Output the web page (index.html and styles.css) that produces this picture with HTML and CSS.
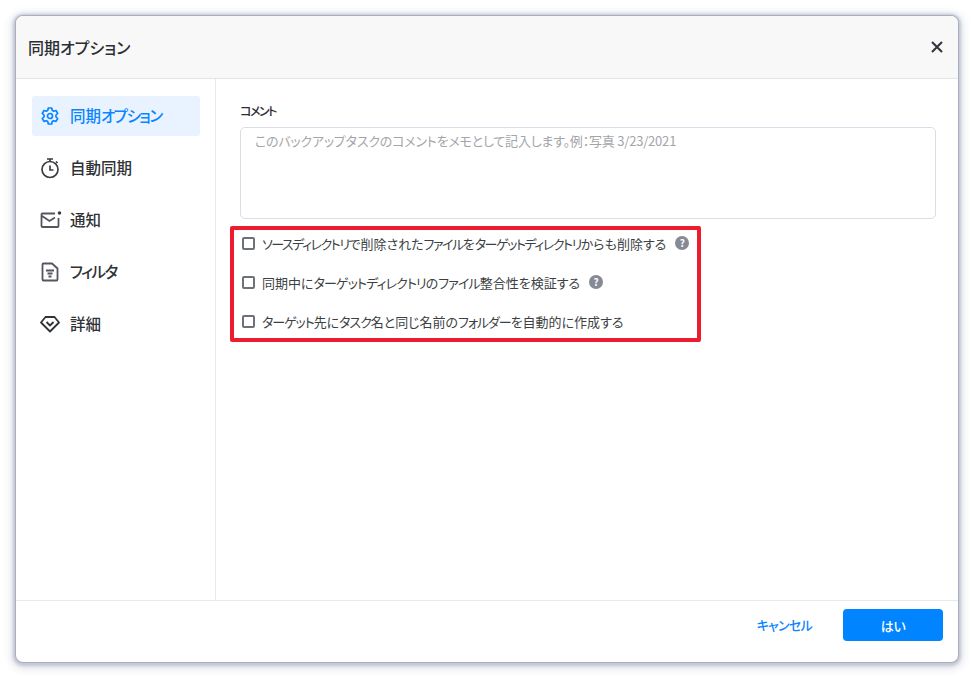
FILE: index.html
```html
<!DOCTYPE html>
<html lang="ja">
<head>
<meta charset="utf-8">
<title>同期オプション</title>
<link rel="stylesheet" href="styles.css">
</head>
<body>
<div class="dialog">
  <header class="head">
    <h1 class="title">同期オプション</h1>
    <svg class="close" width="14" height="14" viewBox="0 0 14 14"><path d="M2 2l10 10M12 2L2 12" fill="none" stroke="#33363b" stroke-width="2.1"/></svg>
  </header>
  <div class="main">
    <nav class="side">
      <a class="item active">
        <svg class="ico" width="20" height="20" viewBox="0 0 20 20" fill="none" stroke="#0a84ff" stroke-width="1.7" stroke-linejoin="round"><path d="M8.3 2h3.4l.5 2.3 1.500.9 2.300-.7 1.700 2.900-1.700 1.600v1.900l1.700 1.600-1.700 2.900-2.300-.7-1.500.9-.5 2.400H8.300l-.5-2.400-1.500-.9-2.300.7-1.700-2.900 1.700-1.600V9L2.300 7.400 4 4.500l2.300.7 1.500-.9z"/><circle cx="10" cy="10" r="2.500"/></svg>
        <span class="txt">同期<span class="k">オプション</span></span>
      </a>
      <a class="item">
        <svg class="ico" width="20" height="22" viewBox="0 0 20 22" fill="none" stroke="#3a3d42" stroke-width="1.700"><circle cx="10" cy="12.500" r="8"/><path d="M7 2h6M10 2v2.500M10 8.500v4.500h3.500M16 4.500l1.500 1.500"/></svg>
        <span class="txt">自動同期</span>
      </a>
      <a class="item">
        <svg class="ico" width="22" height="18" viewBox="0 0 22 18" fill="none" stroke="#53565c" stroke-width="1.800"><path d="M15 2.500H2.500a1 1 0 0 0-1 1v11.500a1 1 0 0 0 1 1h15a1 1 0 0 0 1-1V7M2 5l7.500 5L15 6.500"/><circle cx="19.500" cy="2" r="1.800" fill="#3a3d42" stroke="none"/></svg>
        <span class="txt txt-mail">通知</span>
      </a>
      <a class="item">
        <svg class="ico" width="20" height="20" viewBox="0 0 20 20" fill="none" stroke="#53565c" stroke-width="1.800"><path d="M3.500 1.500h8.500l5.500 5v11a1 1 0 0 1-1 1h-13a1 1 0 0 1-1-1v-15a1 1 0 0 1 1-1zM6 8.500h8M7.500 11.500h5M8.500 14.500h3"/></svg>
        <span class="txt"><span class="k">フィルタ</span></span>
      </a>
      <a class="item">
        <svg class="ico" width="20" height="18" viewBox="0 0 20 18" fill="none" stroke="#2f3236" stroke-width="1.800" stroke-linejoin="round"><path d="M5.500 2h9l4.500 5.500-9 9-9-9zM6.500 7l3.500 3.500L13.500 7"/></svg>
        <span class="txt">詳細</span>
      </a>
    </nav>
    <section class="content">
      <label class="label">コメント</label>
      <textarea class="memo" placeholder="このバックアップタスクのコメントをメモとして記入します。例：写真 3/23/2021"></textarea>
      <div class="options">
        <div class="opt opt-a"><span class="box"></span><span><span class="k">ソースディレクトリ</span>で削除された<span class="k">ファイル</span>を<span class="k">ターゲットディレクトリ</span>からも削除する</span><span class="help">?</span></div>
        <div class="opt opt-b"><span class="box"></span><span>同期中に<span class="k">ターゲットディレクトリ</span>の<span class="k">ファイル</span>整合性を検証する</span><span class="help">?</span></div>
        <div class="opt opt-c"><span class="box"></span><span><span class="k">ターゲット</span>先に<span class="k">タスク</span>名と同じ名前の<span class="k">フォルダー</span>を自動的に作成する</span></div>
        <div class="mark"></div>
      </div>
    </section>
  </div>
  <footer class="foot">
    <a class="cancel">キャンセル</a>
    <button class="ok">はい</button>
  </footer>
</div>
</body>
</html>
```
FILE: styles.css
```css
* { box-sizing: border-box; }
html, body { margin: 0; height: 100%; background: #fff; }
body {
  padding: 16px;
  font-family: "Noto Sans CJK JP", "Noto Sans", sans-serif;
  font-feature-settings: "palt";
  color: #2f3236;
}
.dialog {
  width: 942px;
  height: 646px;
  background: #fff;
  border-radius: 7px;
  box-shadow: 0 0 0 1px #a9aebd, 0 1px 3px 3px #c3c7d3, 0 2px 8px 5px #e3e5ec;
  display: flex;
  flex-direction: column;
  overflow: hidden;
}
.head {
  height: 63px;
  flex: none;
  background: #f8f8f9;
  border-bottom: 1px solid #e3e4e7;
  display: flex;
  align-items: center;
  justify-content: space-between;
  padding: 0 14px 0 12px;
}
.title { margin: 0; font-size: 16px; font-weight: 500; color: #2b2e33; }
.main { flex: 1; display: flex; min-height: 0; }
.side {
  width: 200px;
  flex: none;
  border-right: 1px solid #e8e9ec;
  padding: 17px 15px 0 16px;
  display: flex;
  flex-direction: column;
  gap: 12px;
}
.item {
  height: 40px;
  border-radius: 3px;
  display: flex;
  align-items: center;
  gap: 10px;
  padding-left: 8px;
  font-size: 15.5px;
  font-weight: 500;
  color: #2f3236;
}
.ico { flex: none; }
.txt { margin-top: -2px; }
.txt-mail { margin-left: -2px; }
.k { letter-spacing: -1.5px; }
.item.active { background: #e8f3ff; color: #0a84ff; }
.content { flex: 1; padding: 23px 22px 0 24px; display: flex; flex-direction: column; }
.label { font-size: 12px; line-height: 20px; font-weight: 500; color: #2b2e33; letter-spacing: -1.5px; margin-top: -1px; }
.memo {
  display: block;
  width: 100%;
  height: 92px;
  margin-top: 6px;
  resize: none;
  border: 1px solid #d9dde6;
  border-radius: 5px;
  padding: 3px 14px;
  font: inherit;
  font-size: 13px;
  letter-spacing: -.2px;
  line-height: 20px;
  outline: none;
}
.memo::placeholder { color: #a3a5a9; opacity: 1; }
.options { position: relative; margin-top: 10px; display: flex; flex-direction: column; gap: 11px; padding-left: 2px; }
.opt { height: 28px; display: flex; align-items: center; font-size: 13px; color: #3c3f44; }
.opt-a .k { letter-spacing: -1.46px; }
.opt-b .k { letter-spacing: -.9px; }
.opt-c .k { letter-spacing: -1.07px; }
.box { width: 13px; height: 13px; margin-right: 7px; border: 2px solid #6e7178; border-radius: 2px; flex: none; }
.help {
  width: 14px; height: 14px; margin-left: 9px; border-radius: 50%;
  background: #868a94; color: #fff; font-size: 10px; font-weight: 700; line-height: 14px; text-align: center;
}
.mark { position: absolute; left: -10px; top: -3px; width: 471px; height: 116px; border: 4px solid #ed1c2e; border-radius: 2px; pointer-events: none; }
.foot {
  height: 62px;
  flex: none;
  border-top: 1px solid #e8e9ec;
  display: flex;
  align-items: center;
  justify-content: flex-end;
  gap: 31px;
  padding: 0 15px 13px 0;
}
.cancel { font-size: 13px; font-weight: 500; color: #0a84ff; letter-spacing: -.7px; margin-top: -2px; }
.ok {
  width: 100px; height: 32px; border: 0; border-radius: 4px; background: #0084ff; color: #fff;
  font: inherit; font-size: 13px; font-weight: 500; letter-spacing: -.5px;
}
```
